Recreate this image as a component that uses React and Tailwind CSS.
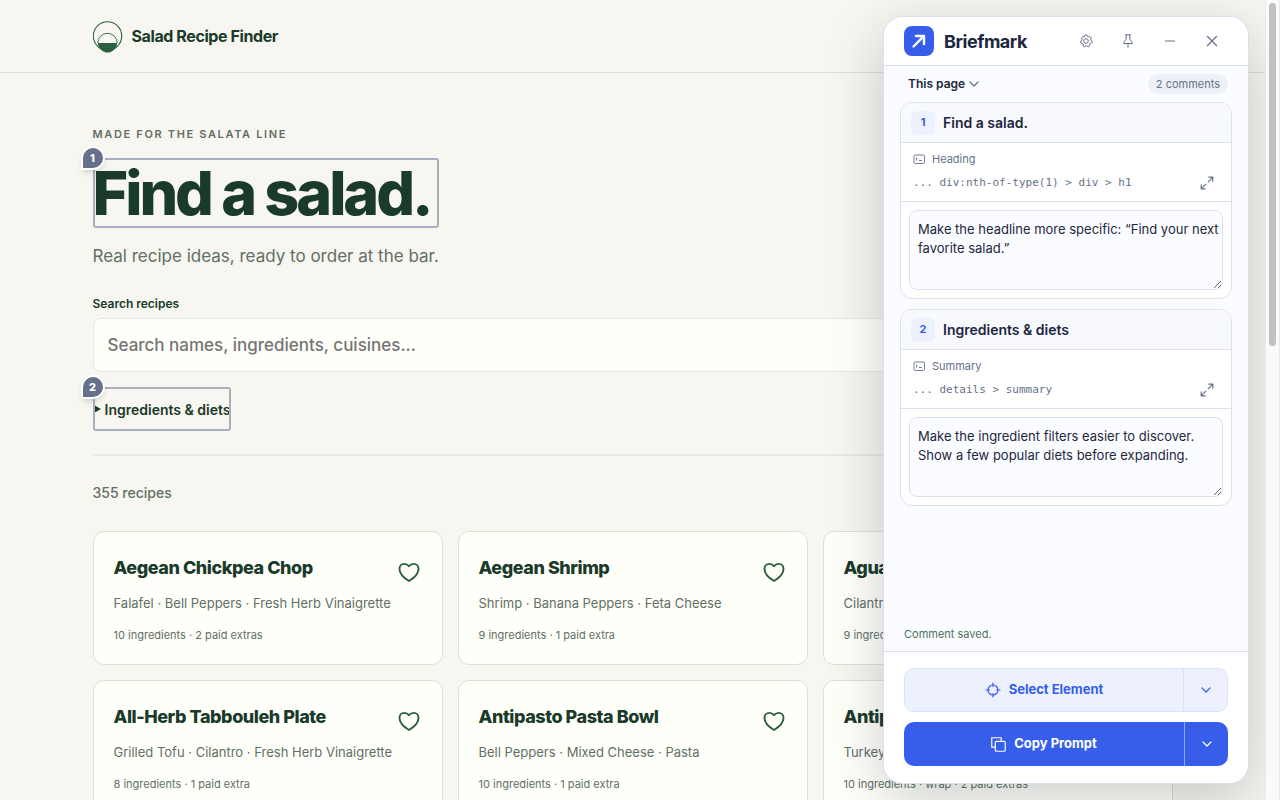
import React from 'react';

const recipes = [
  { name: 'Aegean Chickpea Chop', items: 'Falafel · Bell Peppers · Fresh Herb Vinaigrette', meta: '10 ingredients · 2 paid extras' },
  { name: 'Aegean Shrimp', items: 'Shrimp · Banana Peppers · Feta Cheese', meta: '9 ingredients · 1 paid extra' },
  { name: 'Aguachile Bowl', items: 'Cilantro · Shrimp · Cucumber', meta: '9 ingredients · 2 paid extras' },
  { name: 'All-Herb Tabbouleh Plate', items: 'Grilled Tofu · Cilantro · Fresh Herb Vinaigrette', meta: '8 ingredients · 1 paid extra' },
  { name: 'Antipasto Pasta Bowl', items: 'Bell Peppers · Mixed Cheese · Pasta', meta: '10 ingredients · 1 paid extra' },
  { name: 'Antipasto Wrap', items: 'Turkey · Mixed Cheese · Bell Peppers', meta: '10 ingredients · wrap · 2 paid extras' },
];

const comments = [
  { title: 'Find a salad.', kind: 'Heading', selector: '... div:nth-of-type(1) > div > h1', text: 'Make the headline more specific: “Find your next favorite salad.”' },
  { title: 'Ingredients & diets', kind: 'Summary', selector: '... details > summary', text: 'Make the ingredient filters easier to discover. Show a few popular diets before expanding.' },
];

function SaladLogo() {
  return (
    <svg width="30" height="34" viewBox="0 -2 30 34" fill="none" aria-hidden="true">
      <circle cx="14.500" cy="15" r="14.2" stroke="#2b5f3f" strokeWidth="1.1" />
      <path d="M4.800 22a9.700 9.700 0 0 1 19.400 0" stroke="#2b5f3f" strokeWidth="0.9" />
      <path d="M4.800 22h19.400C23.500 27.500 19.500 31.600 14.500 31.600S5.500 27.500 4.800 22Z" fill="#2b5f3f" />
    </svg>
  );
}

function Heart() {
  return (
    <svg width="24" height="24" viewBox="0 0 24 24" fill="none" stroke="#2b5f3f" strokeWidth="1.9" strokeLinejoin="round" aria-hidden="true">
      <path d="M12 21C9.300 19.300 2.500 14.600 2.500 8.900c0-3 2.100-5 4.800-5 1.900 0 3.500.9 4.700 2.300 1.200-1.400 2.800-2.300 4.700-2.300 2.700 0 4.800 2 4.800 5C21.500 14.600 14.700 19.300 12 21Z" />
    </svg>
  );
}

function Chevron({ className }) {
  return (
    <svg className={className} width="10" height="10" viewBox="0 0 10 10" fill="none" stroke="currentColor" strokeWidth="1.2" strokeLinecap="round" strokeLinejoin="round" aria-hidden="true">
      <path d="M1 3l4 4 4-4" />
    </svg>
  );
}

function Pin({ n }) {
  return (
    <span className="absolute -left-3 -top-3 flex size-6 items-center justify-center rounded-full rounded-bl-sm border-2 border-white bg-[#65708a] text-[11px] font-extrabold text-white shadow-md">
      {n}
    </span>
  );
}

function Marked({ n, children }) {
  return (
    <div className="relative w-fit">
      {children}
      <div className="pointer-events-none absolute inset-0 rounded-[3px] border-2 border-[#a9afbf]" />
      <Pin n={n} />
    </div>
  );
}

function RecipeCard({ recipe }) {
  return (
    <article className="relative h-[134px] overflow-hidden whitespace-nowrap rounded-[11px] border border-[#dde2d4] bg-[#fffffa] px-5 pt-6">
      <h2 className="text-[18px] leading-6 font-extrabold tracking-tight text-[#1a3a2a]">{recipe.name}</h2>
      <p className="mt-[13px] text-[13px] leading-5 text-[#617064]">{recipe.items}</p>
      <p className="mt-3 text-[11px] leading-5 text-[#617064]">{recipe.meta}</p>
      <button type="button" aria-label={`Save ${recipe.name}`} className="absolute top-5 right-[13px] flex size-10 items-center justify-center">
        <Heart />
      </button>
    </article>
  );
}

function SaladPage() {
  return (
    <div className="min-w-0 flex-1 overflow-hidden bg-[#f7f6f0] text-[#1a3a2a]">
      <header className="border-b border-[#dcded5]">
        <div className="mx-auto flex h-[72px] max-w-[1080px] items-center gap-[9px]">
          <SaladLogo />
          <span className="text-[16px] font-bold tracking-tight">Salad Recipe Finder</span>
        </div>
      </header>
      <main className="mx-auto max-w-[1080px] pt-[53px]">
        <p className="text-[11px] leading-4 font-semibold tracking-[0.15em] text-[#617064]">MADE FOR THE SALATA LINE</p>
        <div className="mt-4">
          <Marked n={1}>
            <h1 className="pr-2 text-[61px] leading-[70px] font-extrabold tracking-tighter">Find a salad.</h1>
          </Marked>
        </div>
        <p className="mt-4 text-[17px] leading-6 text-[#617064]">Real recipe ideas, ready to order at the bar.</p>
        <label htmlFor="search" className="mt-7 block text-[12px] leading-4 font-semibold">Search recipes</label>
        <input id="search" type="search" placeholder="Search names, ingredients, cuisines..." className="mt-[6px] block h-[54px] w-full rounded-lg border border-[#e5e9de] bg-[#fffffa] px-[14px] text-[17px] font-medium placeholder:text-[#757575]" />
        <div className="mt-[15px]">
          <Marked n={2}>
            <button type="button" aria-expanded="false" className="flex h-11 items-center gap-1 text-[14px] font-semibold">
              <svg width="8" height="10" viewBox="0 0 8 10" fill="currentColor" aria-hidden="true"><path d="M0 0.500 8 5 0 9.500Z" /></svg>
              Ingredients &amp; diets
            </button>
          </Marked>
        </div>
        <hr className="mt-[23px] border-t-2 border-[#e7eae0]" />
        <p className="mt-[27px] text-[14px] leading-5 font-medium text-[#617064]">355 recipes</p>
        <div className="mt-7 grid grid-cols-3 gap-[15px]">
          {recipes.map((r) => <RecipeCard key={r.name} recipe={r} />)}
        </div>
      </main>
    </div>
  );
}

function CommentCard({ n, c }) {
  return (
    <section className="overflow-hidden rounded-xl border border-[#dbe0ec] bg-white">
      <div className="flex h-10 items-center gap-2 border-b border-[#dbe0ec] bg-[#f8f9fd] px-[10px]">
        <span className="flex size-6 items-center justify-center rounded-md bg-[#edf1fe] text-[11px] font-bold text-[#365eea]">{n}</span>
        <h3 className="text-[14px] font-semibold">{c.title}</h3>
      </div>
      <div className="border-b border-[#dbe0ec] px-3 pt-[6px] pb-1 text-[11px] text-[#65718b]">
        <div className="flex h-5 items-center gap-[7px]">
          <svg width="12" height="12" viewBox="0 0 12 12" fill="none" stroke="currentColor" strokeWidth="0.9" aria-hidden="true">
            <rect x="1" y="2" width="10.500" height="8.500" rx="1.200" />
            <path d="M3.500 4.500v3M6 7.500h3" />
          </svg>
          {c.kind}
        </div>
        <div className="flex h-7 items-center justify-between">
          <code className="font-['DejaVu_Sans_Mono',monospace]">{c.selector}</code>
          <button type="button" aria-label="Expand selector" className="flex size-6 items-center justify-center">
            <svg width="14" height="14" viewBox="0 0 14 14" fill="none" stroke="currentColor" strokeWidth="1.2" strokeLinecap="round" strokeLinejoin="round" aria-hidden="true">
              <path d="M8.200 5.800 12.800 1.200M8.800 1.200h4v4M5.800 8.200 1.200 12.800M1.200 8.800v4h4" />
            </svg>
          </button>
        </div>
      </div>
      <div className="p-2">
        <textarea aria-label={`Comment on ${c.title}`} defaultValue={c.text} className="block h-20 w-full resize-y rounded-lg border border-[#dbe0ec] bg-[#fbfcff] pt-[9px] pr-0 pb-2 pl-2 text-[13px] leading-[19px]" />
      </div>
    </section>
  );
}

function Panel() {
  return (
    <aside className="absolute inset-y-4 right-[31px] flex w-[366px] flex-col overflow-hidden rounded-[20px] border border-[#dbe0ec] bg-[#fbfcff] text-[#1d2740] shadow-[0_16px_56px_rgba(25,35,50,0.22)]">
      <header className="flex h-[49px] shrink-0 items-center border-b border-[#dbe0ec] bg-white px-5">
        <span className="flex size-[30px] items-center justify-center rounded-lg bg-[#365eea]">
          <svg width="16" height="16" viewBox="0 0 16 16" fill="none" stroke="#fff" strokeWidth="2.400" strokeLinecap="round" strokeLinejoin="round" aria-hidden="true">
            <path d="M2.500 13.500 12.800 3.200M5 3h8v8" />
          </svg>
        </span>
        <h2 className="ml-[10px] text-[18px] font-bold tracking-tight">Briefmark</h2>
        <div className="ml-auto flex gap-[10px] text-[#65718b]">
          <button type="button" aria-label="Settings" className="flex size-8 items-center justify-center">
            <svg width="14" height="14" viewBox="0 0 14 14" fill="none" stroke="currentColor" strokeWidth="1" strokeLinejoin="round" aria-hidden="true">
              <path d="M5.600 2.500 6.200.9h1.600l.6 1.600 1 .5 1.700-.5 1.100 1.200-.6 1.600.3 1 1.300.9-.4 1.700-1.600.5-.6.9.1 1.700-1.500.8-1.300-1-1.100 0-1.300 1-1.500-.8.1-1.700-.6-.9-1.600-.5-.4-1.700 1.300-.9.300-1-.6-1.600 1.100-1.200 1.700.5Z" />
              <circle cx="7" cy="7" r="2.300" />
            </svg>
          </button>
          <button type="button" aria-label="Pin" className="flex size-8 items-center justify-center">
            <svg width="14" height="14" viewBox="0 0 14 14" fill="none" stroke="currentColor" strokeWidth="1" strokeLinecap="round" strokeLinejoin="round" aria-hidden="true">
              <path d="M4.500.8h5M5.200.8v4.400L2.600 8.400v1.100h8.800V8.400L8.800 5.200V.8M7 9.500v4" />
            </svg>
          </button>
          <button type="button" aria-label="Minimize" className="flex size-8 items-center justify-center">
            <svg width="12" height="12" viewBox="0 0 12 12" stroke="currentColor" strokeWidth="1.200" aria-hidden="true"><path d="M1 6h10" /></svg>
          </button>
          <button type="button" aria-label="Close" className="flex size-8 items-center justify-center">
            <svg width="12" height="12" viewBox="0 0 12 12" stroke="currentColor" strokeWidth="1.300" strokeLinecap="round" aria-hidden="true"><path d="M1.500 1.500l9 9M10.500 1.500l-9 9" /></svg>
          </button>
        </div>
      </header>
      <div className="flex h-9 shrink-0 items-center justify-between pl-6 pr-5">
        <button type="button" className="flex items-center gap-1 text-[12px] font-semibold">
          This page
          <Chevron className="text-[#65718b]" />
        </button>
        <span className="rounded-full bg-[#edf0f7] px-2 text-[11px] leading-5 text-[#65718b]">2 comments</span>
      </div>
      <div className="flex min-h-0 flex-1 flex-col gap-[10px] overflow-hidden px-4">
        {comments.map((c, i) => <CommentCard key={c.title} n={i + 1} c={c} />)}
      </div>
      <p role="status" className="px-5 pb-[9px] text-[11px] leading-4 text-[#4a7358]">Comment saved.</p>
      <footer className="flex flex-col gap-[10px] border-t border-[#dbe0ec] bg-white px-5 pt-4 pb-[17px]">
        <div className="flex h-11 overflow-hidden rounded-[10px] border border-[#dbe2fd] bg-[#edf1fe] text-[#365eea]">
          <button type="button" className="flex flex-1 items-center justify-center gap-2 text-[13px] font-bold">
            <svg width="16" height="16" viewBox="0 0 16 16" fill="none" stroke="currentColor" strokeWidth="1.200" strokeLinecap="round" aria-hidden="true">
              <circle cx="8" cy="8" r="5" />
              <path d="M8 1v3.500M8 11.500V15M1 8h3.500M11.500 8H15" />
            </svg>
            Select Element
          </button>
          <button type="button" aria-label="Select options" className="flex w-11 items-center justify-center border-l border-[#dbe2fd]"><Chevron /></button>
        </div>
        <div className="flex h-11 overflow-hidden rounded-[10px] bg-[#365eea] text-white">
          <button type="button" className="flex flex-1 items-center justify-center gap-2 text-[13px] font-bold">
            <svg width="15" height="15" viewBox="0 0 14 14" fill="none" stroke="currentColor" strokeWidth="1.100" aria-hidden="true">
              <rect x="4" y="4" width="9.300" height="9.300" rx="1.200" />
              <path d="M4 9.500H.7V.7h8.800V4" />
            </svg>
            Copy Prompt
          </button>
          <button type="button" aria-label="Copy options" className="flex w-11 items-center justify-center border-l border-[#8fa6f4]"><Chevron /></button>
        </div>
      </footer>
    </aside>
  );
}

export default function App() {
  return (
    <div className="relative flex h-screen overflow-hidden font-['Inter',sans-serif]">
      <SaladPage />
      <div className="relative z-10 w-[15px] shrink-0 border-x border-[#e8e8e8] bg-[#fafafa] px-[3px] pt-[3px]" aria-hidden="true">
        <div className="h-[43%] rounded-full bg-[#c1c1c1]" />
      </div>
      <Panel />
    </div>
  );
}
